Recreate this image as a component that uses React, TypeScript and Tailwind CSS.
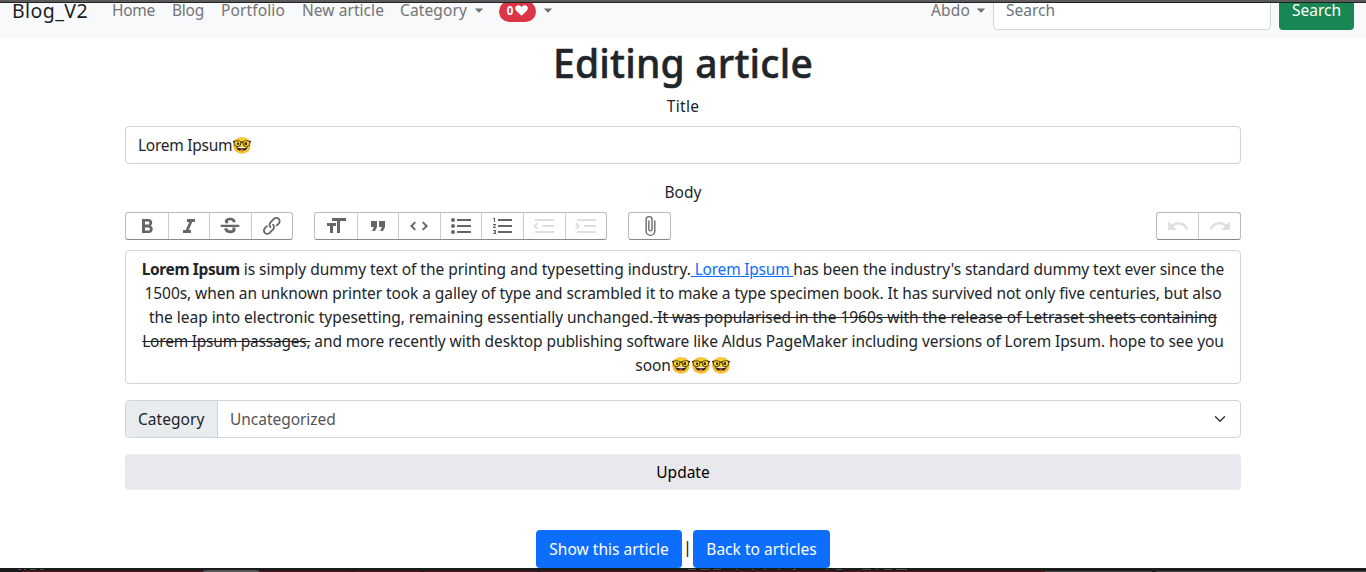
import type { ReactNode } from "react";

const icons = {
  bold: "M15.6 11.8c1-.7 1.6-1.8 1.6-2.8a4 4 0 0 0-4-4H7v14h7c2.1 0 3.7-1.7 3.7-3.8 0-1.5-.8-2.8-2.1-3.4zM10 7.5h3a1.5 1.5 0 1 1 0 3h-3v-3zm3.5 9H10v-3h3.5a1.5 1.5 0 1 1 0 3z",
  italic: "M10 5v3h2.2l-3.4 8H6v3h8v-3h-2.2l3.4-8H18V5h-8z",
  strike:
    "M6.85 7.5C6.85 4.9 9.45 3.8 12.24 3.8c1.64 0 3 .49 3.9 1.28.77.65 1.46 1.73 1.46 3.14h-3.01c0-.31-.05-.59-.15-.85-.29-.86-1.2-1.18-2.25-1.18-1.86 0-2.34.92-2.34 1.6 0 .48.25.88.74 1.21.38.25.3.2.9.3H7.39c-.21-.34-.54-.89-.54-1.8zM21.3 13v-2.2H2.7V13zM13.8 13.6c.5.3.8.5.8 1.07 0 1-.81 1.67-2.28 1.67-1.54 0-2.93-.54-2.93-2.01H6.4c0 .55.08 1.13.24 1.58.81 2.29 3.29 3.3 5.67 3.3 2.27 0 5.3-.89 5.3-4.05 0-.3-.01-.96-.28-1.56z",
  link: "M9.88 13.7a4.3 4.3 0 0 1 0-6.07l3.37-3.37a4.26 4.26 0 0 1 6.07 0 4.3 4.3 0 0 1 0 6.06l-1.96 1.72a.91.91 0 1 1-1.3-1.3l1.97-1.71a2.46 2.46 0 0 0-3.48-3.48l-3.38 3.37a2.46 2.46 0 0 0 0 3.48.91.91 0 1 1-1.3 1.3zM4.25 19.46a4.3 4.3 0 0 1 0-6.07l1.93-1.9a.91.91 0 1 1 1.3 1.3l-1.93 1.9a2.46 2.46 0 0 0 3.48 3.48l3.37-3.38c.96-.96.96-2.52 0-3.48a.91.91 0 1 1 1.3-1.3 4.3 4.3 0 0 1 0 6.07l-3.38 3.38a4.26 4.26 0 0 1-6.07 0z",
  heading: "M12 9v3H9v7H6v-7H3V9h9zM8 4h14v3h-6v12h-3V7H8V4z",
  quote: "M6 17h3l2-4V7H5v6h3zm8 0h3l2-4V7h-6v6h3z",
  code: "M18.2 12L15 15.2l1.4 1.4L21 12l-4.6-4.6L15 8.8l3.2 3.2zM5.8 12L9 8.8 7.6 7.4 3 12l4.6 4.6L9 15.2 5.8 12z",
  bullets:
    "M4 4a2 2 0 1 0 0 4 2 2 0 0 0 0-4zm0 6a2 2 0 1 0 0 4 2 2 0 0 0 0-4zm0 6a2 2 0 1 0 0 4 2 2 0 0 0 0-4zm4 3h14v-2H8v2zm0-6h14v-2H8v2zm0-8v2h14V5H8z",
  numbers:
    "M2 17h2v.5H3v1h1v.5H2v1h3v-4H2v1zm1-9h1V4H2v1h1v3zm-1 3h1.8L2 13.1v.9h3v-1H3.2L5 10.9V10H2v1zm5-6v2h14V5H7zm0 14h14v-2H7v2zm0-6h14v-2H7v2z",
  outdent: "M3 19h19v-2H3v2zm7-6h12v-2H10v2zm-8.3-.3l2.8 2.9L6 14.2 4 12l2-2-1.4-1.5L1 12l.7.7zM3 5v2h19V5H3z",
  indent: "M3 19h19v-2H3v2zm7-6h12v-2H10v2zm-6.9-1L1 14.2l1.4 1.4L6 12l-.7-.7-2.8-2.8L1 9.9 3.1 12zM3 5v2h19V5H3z",
  attach:
    "M16.5 6v11.5a4 4 0 1 1-8 0V5a2.5 2.5 0 0 1 5 0v10.5a1 1 0 1 1-2 0V6H10v9.5a2.5 2.5 0 0 0 5 0V5a4 4 0 1 0-8 0v12.5a5.5 5.5 0 0 0 11 0V6h-1.5z",
  undo: "M12.5 8c-2.6 0-5 1-6.9 2.6L2 7v9h9l-3.6-3.6A8 8 0 0 1 20 16l2.4-.8a10.5 10.5 0 0 0-10-7.2z",
  redo: "M18.4 10.6a10.5 10.5 0 0 0-16.9 4.6L4 16a8 8 0 0 1 12.7-3.6L13 16h9V7l-3.6 3.6z",
};

type IconName = keyof typeof icons;
const disabled: IconName[] = ["outdent", "indent", "undo", "redo"];

function ToolGroup({ names }: { names: IconName[] }) {
  return (
    <div className="flex h-7 rounded-[3px] border border-[#bbb] border-b-[#888]">
      {names.map((name, i) => (
        <button
          key={name}
          aria-label={name}
          className={`flex w-[41.6px] items-center justify-center ${i > 0 ? "border-l border-[#ccc]" : ""}`}
        >
          <svg
            viewBox="0 0 24 24"
            className={`${name === "attach" ? "size-[22px]" : "size-6"} ${
              disabled.includes(name) ? "fill-[#dfdfdf]" : "fill-[#666]"
            }`}
          >
            <path d={icons[name]} />
          </svg>
        </button>
      ))}
    </div>
  );
}

function Caret() {
  return (
    <svg viewBox="0 0 10 5" className="mb-[2px] h-[5px] w-[10px] fill-[#6f7070]">
      <path d="M.8.5h8.4L5 4.8z" />
    </svg>
  );
}

function Line({ children }: { children: ReactNode }) {
  return <div className="h-6 text-center whitespace-pre">{children}</div>;
}

export default function App() {
  return (
    <div className="flex h-[572px] flex-col overflow-hidden bg-white font-['Noto_Sans',sans-serif] text-[15.5px] leading-6 text-[#212529]">
      <div className="h-[3px] shrink-0 border-b border-[#222] bg-[#5a5a5a]" />
      <header className="flex h-[35px] shrink-0 items-end overflow-hidden bg-[#f8f9fa]">
        <nav className="flex h-[54px] w-full shrink-0 items-center px-3 text-[#737475]">
          <a className="w-[100px] text-[19.5px] tracking-[0.43px] text-[#1c1d1e]">Blog_V2</a>
          <a className="w-[60px] pb-0.5 tracking-[-0.27px]">Home</a>
          <a className="w-[49px] pb-0.5 tracking-[-0.24px]">Blog</a>
          <a className="w-[81px] pb-0.5 tracking-[0.13px]">Portfolio</a>
          <a className="w-[98px] pb-0.5 tracking-[0.06px]">New article</a>
          <a className="w-[74px] pb-0.5 tracking-[0.12px]">Category</a>
          <Caret />
          <span className="ml-[15px] flex h-[21px] w-[37px] items-center justify-center gap-[2px] rounded-full bg-[#dc3545] text-[12px] font-bold text-white">
            <span className="text-[11.5px]">0</span>
            <svg viewBox="0 0 14 12" className="mb-px h-[11px] w-[13px] fill-white">
              <path d="M7 11.6 1.2 6.4C-.3 4.8-.2 2.3 1.2 1.1 2.9-.4 5.4 0 7 2.2 8.6 0 11.1-.4 12.8 1.1c1.4 1.2 1.5 3.7 0 5.3z" />
            </svg>
          </span>
          <span className="ml-[7px] flex">
            <Caret />
          </span>
          <a className="ml-auto w-[45px] pb-0.5 tracking-[0.16px]">Abdo</a>
          <Caret />
          <div className="ml-[7px] flex h-[38px] w-[278px] items-center rounded-[4px] border border-[#ced4da] bg-white px-3 pb-0.5 text-[#6c757d]">
            Search
          </div>
          <button className="ml-2 h-[38px] w-[75px] rounded-[4px] bg-[#198754] pb-0.5 text-white">Search</button>
        </nav>
      </header>

      <main className="mx-auto flex w-[1116px] flex-1 flex-col">
        <h1 className="mb-2 h-12 text-center text-[39px] leading-[49px] font-medium tracking-[0.2px] [-webkit-text-stroke:0.5px_#212529]">
          Editing article
        </h1>
        <label className="mb-2 text-center tracking-[0.3px]">Title</label>
        <div className="mb-4 flex h-[38px] items-center rounded-[4px] border border-[#ced4da] px-3">
          <span className="tracking-[-0.27px]">Lorem Ipsum</span>
          <span className="text-[16px]">🤓</span>
        </div>
        <label className="mb-2 text-center">Body</label>
        <div className="mb-[10px] flex">
          <ToolGroup names={["bold", "italic", "strike", "link"]} />
          <div className="ml-[20.6px]">
            <ToolGroup names={["heading", "quote", "code", "bullets", "numbers", "outdent", "indent"]} />
          </div>
          <div className="ml-[20.6px]">
            <ToolGroup names={["attach"]} />
          </div>
          <div className="ml-auto">
            <ToolGroup names={["undo", "redo"]} />
          </div>
        </div>

        <article className="mb-4 h-[134px] rounded-[4px] border border-[#ced4da] py-[6px]">
          <Line>
            <strong className="font-bold tracking-[-0.38px]">Lorem Ipsum</strong>
            <span className="tracking-[-0.035px]"> is simply dummy text of the printing and typesetting industry.</span>
            <a className="tracking-[-0.22px] text-[#0d6efd] underline"> Lorem Ipsum </a>
            <span className="tracking-[-0.07px]">has been the industry's standard dummy text ever since the</span>
          </Line>
          <Line>
            <span className="tracking-[-0.071px]">
              1500s, when an unknown printer took a galley of type and scrambled it to make a type specimen book. It has
              survived not only five centuries, but also
            </span>
          </Line>
          <Line>
            <span className="tracking-[-0.03px]">the leap into electronic typesetting, remaining essentially unchanged.</span>
            <del className="tracking-[-0.015px]"> It was popularised in the 1960s with the release of Letraset sheets containing</del>
          </Line>
          <Line>
            <del className="tracking-[-0.22px]">Lorem Ipsum passages,</del>
            <span className="tracking-[-0.08px]">
              {" and more recently with desktop publishing software like Aldus PageMaker including versions of Lorem Ipsum. hope to see you"}
            </span>
          </Line>
          <Line>
            <span className="tracking-[-0.1px]">soon</span>
            <span className="text-[16px]">🤓🤓🤓</span>
          </Line>
        </article>

        <div className="mb-4 flex h-[38px] rounded-[4px] border border-[#ced4da]">
          <span className="flex w-[92px] items-center rounded-l-[3px] border-r border-[#ced4da] bg-[#e9ecef] pl-3 tracking-[0.05px]">
            Category
          </span>
          <div className="flex flex-1 items-center justify-between px-3 tracking-[-0.04px] text-[#555]">
            Uncategorized
            <svg viewBox="0 0 16 16" className="mr-[2px] size-3 fill-none stroke-[#343a40] stroke-2">
              <path d="m2 5 6 6 6-6" strokeLinecap="round" strokeLinejoin="round" />
            </svg>
          </div>
        </div>
        <button className="mb-10 h-9 shrink-0 rounded-[4px] bg-[#e9e8ed] text-black">Update</button>
        <div className="flex justify-center">
          <a className="flex h-[38px] w-[146px] items-center justify-center rounded-[4px] bg-[#0d6efd] tracking-[0.04px] text-white">
            Show this article
          </a>
          <span className="w-[11px] pt-[5px] text-center text-[17px]">|</span>
          <a className="flex h-[38px] w-[137px] items-center justify-center rounded-[4px] bg-[#0d6efd] tracking-[0.04px] text-white">
            Back to articles
          </a>
        </div>
      </main>

      <svg viewBox="0 0 1366 4" className="h-1 w-full shrink-0 bg-[#191c1b]">
        <path d="M22 3.5H351M354 3.5H421M424 3.5H537M541 3.5H839M843 3.5H1045" stroke="#57161b" />
        <path d="M1045 3.5H1152M1156 3.5H1366" stroke="#4a4b4b" />
        <path d="M203 4q0-2 3-2h50q3 0 3 2z" fill="#555956" />
        <path
          d="M18 1.5h3M24 1.5h2M30 1.5h6M40 1.5h4M688 1.5h8M700 1.5h10M713 1.5h8M736 1.5h2M752 1.5h2M764 1.5h2M778 1.5h2M793 1.5h3M826 1.5h2M836 1.5h6M862 1.5h9M876 1.5h2M884 1.5h8M896 1.5h11"
          stroke="#4b4e4d"
        />
      </svg>
    </div>
  );
}
